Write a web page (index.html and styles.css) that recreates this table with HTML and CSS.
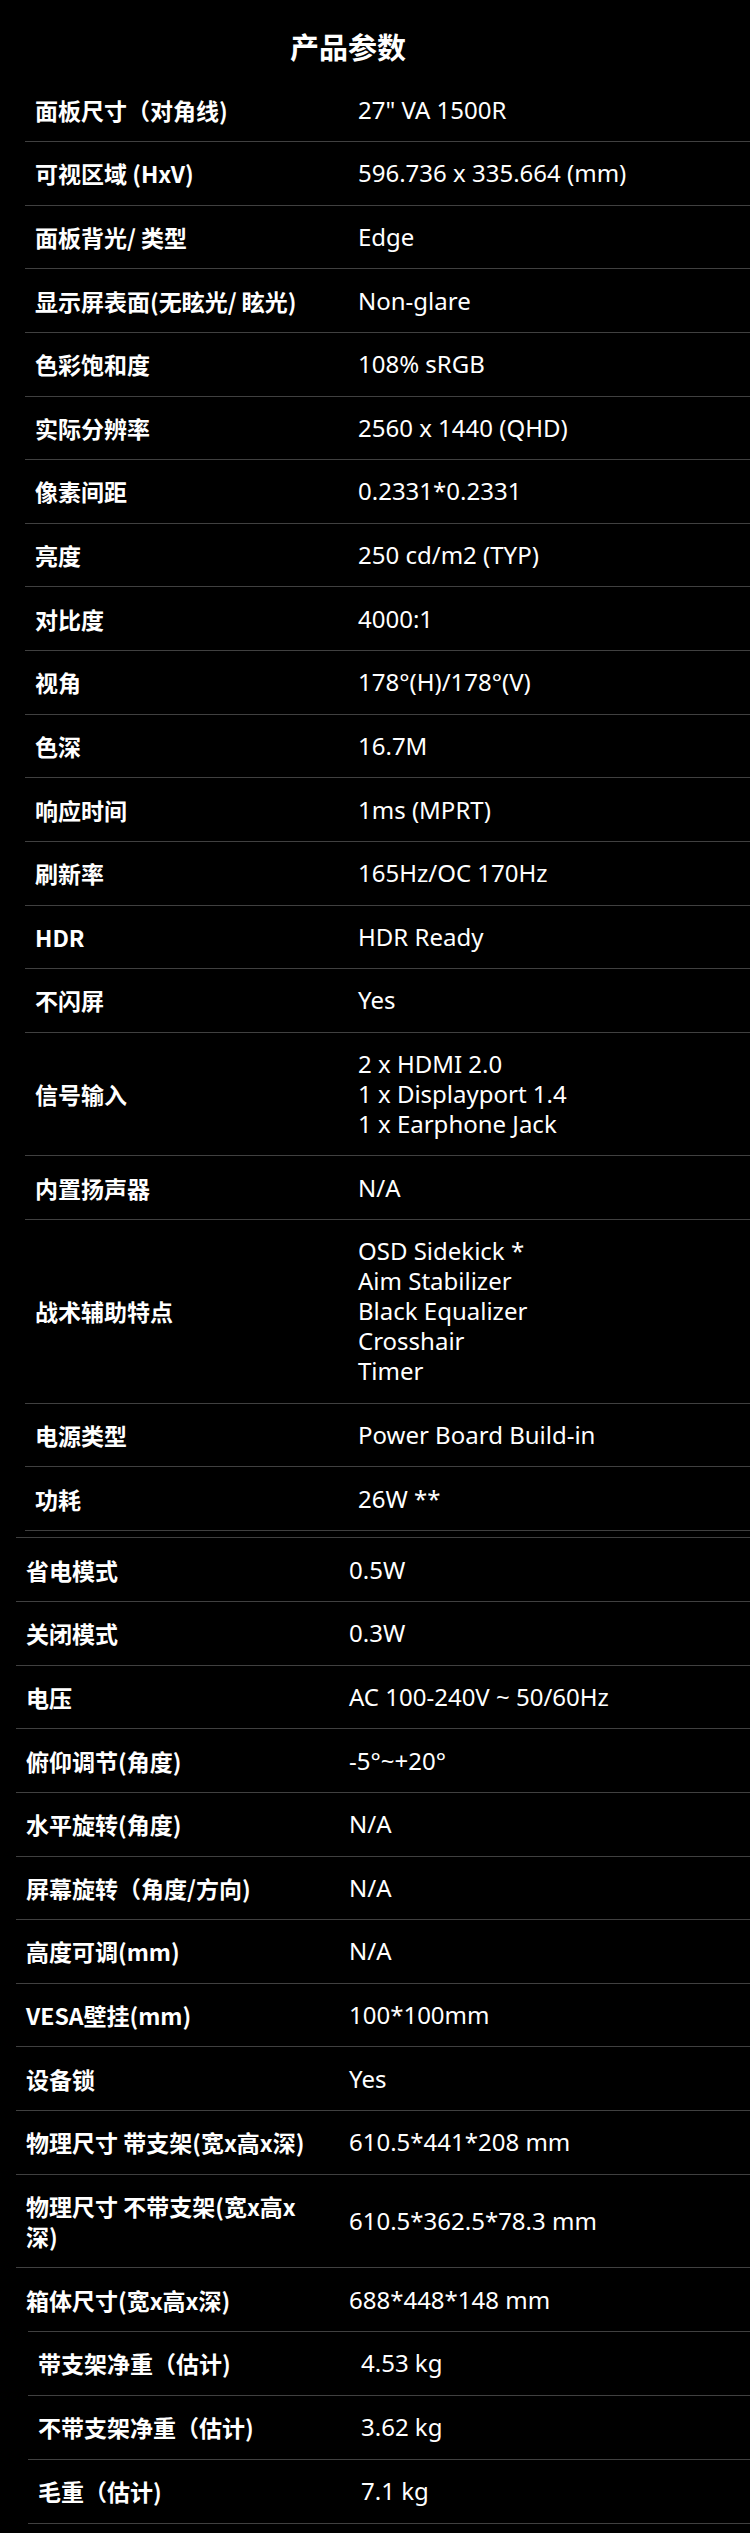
FILE: index.html
```html
<!DOCTYPE html>
<html lang="zh-CN">
<head>
<meta charset="utf-8">
<title>产品参数</title>
<link rel="stylesheet" href="styles.css">
</head>
<body>
<div class="page">
  <h1 class="title">产品参数</h1>

  <div class="spec spec-main">
    <div class="row"><div class="label">面板尺寸（对角线)</div><div class="value">27" VA 1500R</div></div>
    <div class="row"><div class="label">可视区域 (HxV)</div><div class="value">596.736 x 335.664 (mm)</div></div>
    <div class="row"><div class="label">面板背光/ 类型</div><div class="value">Edge</div></div>
    <div class="row"><div class="label">显示屏表面(无眩光/ 眩光)</div><div class="value">Non-glare</div></div>
    <div class="row"><div class="label">色彩饱和度</div><div class="value">108% sRGB</div></div>
    <div class="row"><div class="label">实际分辨率</div><div class="value">2560 x 1440 (QHD)</div></div>
    <div class="row"><div class="label">像素间距</div><div class="value">0.2331*0.2331</div></div>
    <div class="row"><div class="label">亮度</div><div class="value">250 cd/m2 (TYP)</div></div>
    <div class="row"><div class="label">对比度</div><div class="value">4000:1</div></div>
    <div class="row"><div class="label">视角</div><div class="value">178°(H)/178°(V)</div></div>
    <div class="row"><div class="label">色深</div><div class="value">16.7M</div></div>
    <div class="row"><div class="label">响应时间</div><div class="value">1ms (MPRT)</div></div>
    <div class="row"><div class="label">刷新率</div><div class="value">165Hz/OC 170Hz</div></div>
    <div class="row"><div class="label">HDR</div><div class="value">HDR Ready</div></div>
    <div class="row"><div class="label">不闪屏</div><div class="value">Yes</div></div>
    <div class="row"><div class="label">信号输入</div><div class="value">2 x HDMI 2.0<br>1 x Displayport 1.4<br>1 x Earphone Jack</div></div>
    <div class="row"><div class="label">内置扬声器</div><div class="value">N/A</div></div>
    <div class="row"><div class="label">战术辅助特点</div><div class="value">OSD Sidekick *<br>Aim Stabilizer<br>Black Equalizer<br>Crosshair<br>Timer</div></div>
    <div class="row"><div class="label">电源类型</div><div class="value">Power Board Build-in</div></div>
    <div class="row"><div class="label">功耗</div><div class="value">26W **</div></div>
  </div>

  <div class="spec spec-power">
    <div class="row"><div class="label">省电模式</div><div class="value">0.5W</div></div>
    <div class="row"><div class="label">关闭模式</div><div class="value">0.3W</div></div>
    <div class="row"><div class="label">电压</div><div class="value">AC 100-240V ~ 50/60Hz</div></div>
    <div class="row"><div class="label">俯仰调节(角度)</div><div class="value">-5°~+20°</div></div>
    <div class="row"><div class="label">水平旋转(角度)</div><div class="value">N/A</div></div>
    <div class="row"><div class="label">屏幕旋转（角度/方向)</div><div class="value">N/A</div></div>
    <div class="row"><div class="label">高度可调(mm)</div><div class="value">N/A</div></div>
    <div class="row"><div class="label">VESA壁挂(mm)</div><div class="value">100*100mm</div></div>
    <div class="row"><div class="label">设备锁</div><div class="value">Yes</div></div>
    <div class="row"><div class="label">物理尺寸 带支架(宽x高x深)</div><div class="value">610.5*441*208 mm</div></div>
    <div class="row"><div class="label">物理尺寸 不带支架(宽x高x深)</div><div class="value">610.5*362.5*78.3 mm</div></div>
    <div class="row"><div class="label">箱体尺寸(宽x高x深)</div><div class="value">688*448*148 mm</div></div>
  </div>

  <div class="spec spec-weight">
    <div class="row"><div class="label">带支架净重（估计)</div><div class="value">4.53 kg</div></div>
    <div class="row"><div class="label">不带支架净重（估计)</div><div class="value">3.62 kg</div></div>
    <div class="row"><div class="label">毛重（估计)</div><div class="value">7.1 kg</div></div>
  </div>
</div>
</body>
</html>
```
FILE: styles.css
```css
html, body {
  margin: 0;
  padding: 0;
  background: #000;
}

.page {
  width: 750px;
  min-height: 2533px;
  background: #000;
  color: #fff;
  font-family: "Noto Sans", "Noto Sans CJK SC", sans-serif;
}

.title {
  margin: 0;
  display: flex;
  justify-content: center;
  padding: 26px 54px 0 0;
  height: 52.4px;
  font-family: "Noto Sans CJK SC", sans-serif;
  font-weight: 700;
  font-size: 29px;
  line-height: 40px;
}

.spec {
  display: flex;
  flex-direction: column;
}

.row {
  display: grid;
  grid-template-columns: 323px 1fr;
  align-items: center;
  padding: 16.32px 0 16.32px 10px;
}

.label {
  font-family: "Noto Sans CJK SC", sans-serif;
  font-weight: 700;
  font-size: 23px;
  line-height: 30px;
  padding-right: 33px;
}

.value {
  font-family: "Noto Sans", "Noto Sans CJK SC", sans-serif;
  font-size: 24px;
  line-height: 30px;
  color: #fff;
}

.spec-main {
  margin-left: 25px;
}

.spec-main .row {
  border-bottom: 1px solid #404040;
}

.spec-power {
  margin: 6.5px 0 0 16px;
}

.spec-power .row {
  border-top: 1px solid #404040;
}

.spec-weight {
  margin-left: 28px;
  border-bottom: 1px solid #404040;
}

.spec-weight .row {
  border-top: 1px solid #404040;
  padding-top: 16.5px;
  padding-bottom: 16.5px;
}
```
